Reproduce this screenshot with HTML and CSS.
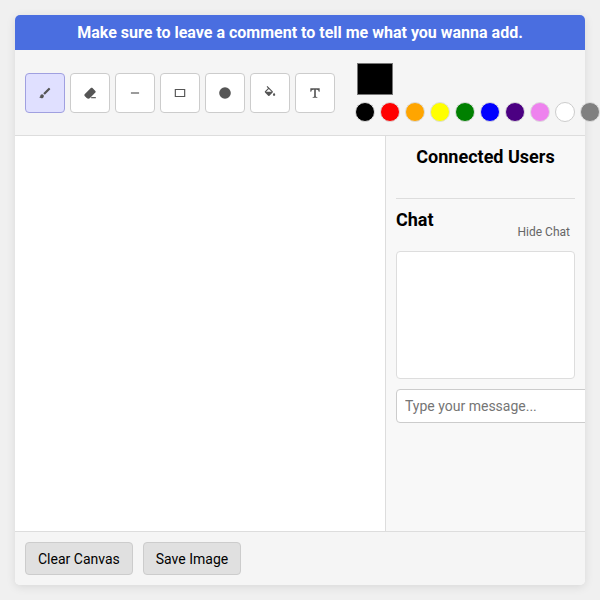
FILE: index.html
```html
<!DOCTYPE html>
<html lang="en">
<head>
<meta charset="utf-8">
<title>Drawing board</title>
<link rel="stylesheet" href="styles.css">
</head>
<body>
<div class="app">
  <div class="banner">Make sure to leave a comment to tell me what you wanna add.</div>
  <div class="toolbar">
    <div class="tools">
      <button class="tool active"><svg viewBox="0 0 24 24"><path d="M7 14c-1.66 0-3 1.34-3 3 0 1.31-1.16 2-2 2 .92 1.22 2.49 2 4 2 2.21 0 4-1.79 4-4 0-1.66-1.34-3-3-3zm13.71-9.37-1.34-1.34a1 1 0 0 0-1.41 0L9 12.25 11.75 15l8.96-8.96a1 1 0 0 0 0-1.41z"/></svg></button>
      <button class="tool"><svg viewBox="0 0 24 24"><path d="M16.24 3.56l4.95 4.94c.78.79.78 2.05 0 2.84L12 20.53a4 4 0 0 1-5.66 0L2.81 17c-.78-.79-.78-2.05 0-2.84L13.4 3.56c.79-.78 2.05-.78 2.84 0z"/><rect x="14" y="19" width="8" height="2"/></svg></button>
      <button class="tool"><svg viewBox="0 0 24 24"><rect x="5" y="11" width="14" height="2"/></svg></button>
      <button class="tool"><svg viewBox="0 0 24 24"><path d="M3 5h18v14H3zm2 2v10h14V7z" fill-rule="evenodd"/></svg></button>
      <button class="tool"><svg viewBox="0 0 24 24"><circle cx="12" cy="12" r="10"/></svg></button>
      <button class="tool"><svg viewBox="0 0 24 24"><path d="M16.56 8.94 7.62 0 6.21 1.41l2.38 2.38-5.15 5.15a1.49 1.49 0 0 0 0 2.12l5.5 5.5c.29.29.68.44 1.06.44s.77-.15 1.06-.44l5.5-5.5c.59-.58.59-1.53 0-2.12zM5.21 10 10 5.21 14.79 10H5.21zM19 11.5s-2 2.17-2 3.5c0 1.1.9 2 2 2s2-.9 2-2c0-1.33-2-3.5-2-3.5z"/></svg></button>
      <button class="tool"><svg viewBox="0 0 24 24"><path d="M4 4h16v6h-1.6c-.3-2-1-3.4-3.4-3.4h-1.6v11c0 1 .6 1.2 2.6 1.2V20H8v-1.2c2 0 2.6-.2 2.6-1.2v-11H9c-2.400 0-3.100 1.400-3.400 3.400H4z"/></svg></button>
    </div>
    <div class="palette">
      <div class="current"></div>
      <div class="swatches">
        <span class="swatch black"></span>
        <span class="swatch red"></span>
        <span class="swatch orange"></span>
        <span class="swatch yellow"></span>
        <span class="swatch green"></span>
        <span class="swatch blue"></span>
        <span class="swatch indigo"></span>
        <span class="swatch violet"></span>
        <span class="swatch white"></span>
        <span class="swatch gray"></span>
      </div>
    </div>
  </div>
  <div class="main">
    <div class="canvas"></div>
    <aside class="side">
      <h3 class="users-title">Connected Users</h3>
      <div class="chat-head">
        <h3 class="chat-title">Chat</h3>
        <span class="hide">Hide Chat</span>
      </div>
      <div class="messages"></div>
      <input class="msg-input" type="text" placeholder="Type your message...">
    </aside>
  </div>
  <div class="footer">
    <button class="action">Clear Canvas</button>
    <button class="action">Save Image</button>
  </div>
</div>
</body>
</html>
```
FILE: styles.css
```css
* { box-sizing: border-box; }
html, body { height: 100%; }
body {
  margin: 0;
  padding: 15px;
  background: #f0f0f0;
  font-family: Roboto, "Liberation Sans", sans-serif;
  color: #000;
}
.app {
  width: 570px;
  height: 570px;
  display: flex;
  flex-direction: column;
  background: #f8f8f8;
  border-radius: 5px;
  box-shadow: 0 2px 10px rgba(0, 0, 0, 0.1);
}
.banner {
  height: 35px;
  flex: none;
  background: #4a6ee0;
  color: #fff;
  border-radius: 5px 5px 0 0;
  font-size: 16px;
  font-weight: 700;
  line-height: 35px;
  text-align: center;
}
.toolbar {
  height: 86px;
  flex: none;
  display: flex;
  align-items: center;
  gap: 20px;
  padding: 0 10px;
  background: #f5f5f5;
  border-bottom: 1px solid #ddd;
}
.tools { display: flex; gap: 5px; }
.tool {
  width: 40px;
  height: 40px;
  padding: 0;
  display: flex;
  align-items: center;
  justify-content: center;
  background: #fff;
  border: 1px solid #ccc;
  border-radius: 4px;
}
.tool svg { width: 14px; height: 14px; fill: #555; }
.tool.active { background: #e0e0ff; border-color: #a0a0e0; }
.palette { display: flex; flex-direction: column; gap: 7px; }
.current {
  width: 36px;
  height: 32px;
  margin-left: 2px;
  background: #000;
  border: 1px solid #777;
}
.swatches { display: flex; gap: 5px; width: 245px; }
.swatch {
  flex: none;
  width: 20px;
  height: 20px;
  border-radius: 50%;
  border: 1px solid #ddd;
}
.black { background: #000; }
.red { background: #f00; }
.orange { background: #ffa500; }
.yellow { background: #ff0; }
.green { background: #008000; }
.blue { background: #00f; }
.indigo { background: #4b0082; }
.violet { background: #ee82ee; }
.white { background: #fff; border-color: #ccc; }
.gray { background: #808080; }
.main { flex: 1; display: flex; min-height: 0; }
.canvas { flex: 1; background: #fff; }
.side {
  width: 200px;
  flex: none;
  padding: 10px;
  overflow: hidden;
  background: #f8f8f8;
  border-left: 1px solid #ddd;
}
.users-title {
  margin: 0 0 31px;
  height: 21px;
  font-size: 18px;
  font-weight: 700;
  line-height: 21px;
  text-align: center;
}
.chat-head {
  display: flex;
  justify-content: space-between;
  align-items: flex-end;
  height: 53px;
  padding: 10px 5px 0 0;
  border-top: 1px solid #ddd;
}
.chat-title { margin: 0; align-self: flex-start; font-size: 18px; font-weight: 700; line-height: 21px; }
.hide { margin-bottom: 12px; font-size: 12px; line-height: 14px; color: #666; }
.messages {
  width: 179px;
  height: 128px;
  margin-top: 0;
  background: #fff;
  border: 1px solid #ddd;
  border-radius: 4px;
}
.msg-input {
  display: block;
  width: 200px;
  height: 34px;
  margin-top: 10px;
  padding: 8px;
  background: #fff;
  border: 1px solid #ccc;
  border-radius: 4px;
  font-family: inherit;
  font-size: 14px;
}
.msg-input::placeholder { color: #757575; }
.footer {
  height: 54px;
  flex: none;
  display: flex;
  gap: 10px;
  padding: 10px;
  background: #f5f5f5;
  border-top: 1px solid #ddd;
  border-radius: 0 0 5px 5px;
}
.action {
  height: 33px;
  padding: 0 12px;
  background: #e0e0e0;
  border: 1px solid #ccc;
  border-radius: 4px;
  color: #000;
  font-family: inherit;
  font-size: 14px;
}
```
